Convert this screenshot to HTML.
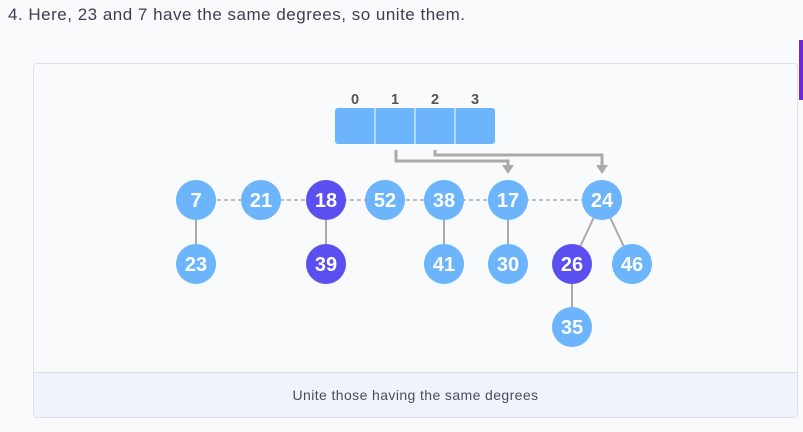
<!DOCTYPE html>
<html><head><style>
body{margin:0;width:803px;height:432px;background:#f9fafc;position:relative;overflow:hidden;font-family:"Liberation Sans",sans-serif}
.t{position:absolute;left:8px;top:5px;font-size:17px;color:#3d3f50;letter-spacing:0.5px}
.box{position:absolute;left:33px;top:63px;width:763px;height:353px;border:1px solid #dde1e8;border-radius:4px;background:#f9fafc;overflow:hidden}
.cap{position:absolute;left:0;right:0;bottom:0;height:44px;border-top:1px solid #d8dee8;background:#eff4fc;text-align:center;line-height:44px;font-size:14px;letter-spacing:0.4px;color:#4a4c5c}
.bar{position:absolute;left:799px;top:40px;width:4px;height:60px;background:#6d28d9}
</style></head><body>
<div class="t">4. Here, 23 and 7 have the same degrees, so unite them.</div>
<div class="bar"></div>
<div class="box"><div class="cap">Unite those having the same degrees</div></div>
<svg style="position:absolute;left:0;top:0" width="803" height="432">
<g font-family="Liberation Sans" font-weight="bold" font-size="14.5" fill="#555" text-anchor="middle">
<text x="355" y="104">0</text><text x="395" y="104">1</text><text x="435" y="104">2</text><text x="475" y="104">3</text></g>
<rect x="335" y="108" width="160" height="36" rx="3" fill="#6cb4fb"/>
<g stroke="#fff" stroke-width="1"><line x1="375" y1="108" x2="375" y2="144"/><line x1="415" y1="108" x2="415" y2="144"/><line x1="455" y1="108" x2="455" y2="144"/></g>
<g stroke="#aaa" stroke-width="3" fill="none">
<polyline points="396,150 396,161 508,161 508,167"/>
<polyline points="435,150 435,155 602,155 602,167"/>
<line x1="196" y1="200" x2="602" y2="200" stroke-width="1.5" stroke-dasharray="4,3"/>
<line x1="196" y1="200" x2="196" y2="264" stroke-width="2"/>
<line x1="326" y1="200" x2="326" y2="264" stroke-width="2"/>
<line x1="444" y1="200" x2="444" y2="264" stroke-width="2"/>
<line x1="508" y1="200" x2="508" y2="264" stroke-width="2"/>
<line x1="602" y1="200" x2="572" y2="264" stroke-width="2"/>
<line x1="602" y1="200" x2="632" y2="264" stroke-width="2"/>
<line x1="572" y1="264" x2="572" y2="327" stroke-width="2"/>
</g>
<g fill="#aaa"><polygon points="502,165 514,165 508,174"/><polygon points="596,165 608,165 602,174"/></g>
<g font-family="Liberation Sans" font-weight="bold" font-size="20" fill="#fff" text-anchor="middle">
<circle cx="196" cy="200" r="20" fill="#6cb4fb"/><text x="196" y="207">7</text>
<circle cx="261" cy="200" r="20" fill="#6cb4fb"/><text x="261" y="207">21</text>
<circle cx="326" cy="200" r="20" fill="#5a4ff0"/><text x="326" y="207">18</text>
<circle cx="385" cy="200" r="20" fill="#6cb4fb"/><text x="385" y="207">52</text>
<circle cx="444" cy="200" r="20" fill="#6cb4fb"/><text x="444" y="207">38</text>
<circle cx="508" cy="200" r="20" fill="#6cb4fb"/><text x="508" y="207">17</text>
<circle cx="602" cy="200" r="20" fill="#6cb4fb"/><text x="602" y="207">24</text>
<circle cx="196" cy="264" r="20" fill="#6cb4fb"/><text x="196" y="271">23</text>
<circle cx="326" cy="264" r="20" fill="#5a4ff0"/><text x="326" y="271">39</text>
<circle cx="444" cy="264" r="20" fill="#6cb4fb"/><text x="444" y="271">41</text>
<circle cx="508" cy="264" r="20" fill="#6cb4fb"/><text x="508" y="271">30</text>
<circle cx="572" cy="264" r="20" fill="#5a4ff0"/><text x="572" y="271">26</text>
<circle cx="632" cy="264" r="20" fill="#6cb4fb"/><text x="632" y="271">46</text>
<circle cx="572" cy="327" r="20" fill="#6cb4fb"/><text x="572" y="334">35</text>
</g>
</svg>
</body></html>
